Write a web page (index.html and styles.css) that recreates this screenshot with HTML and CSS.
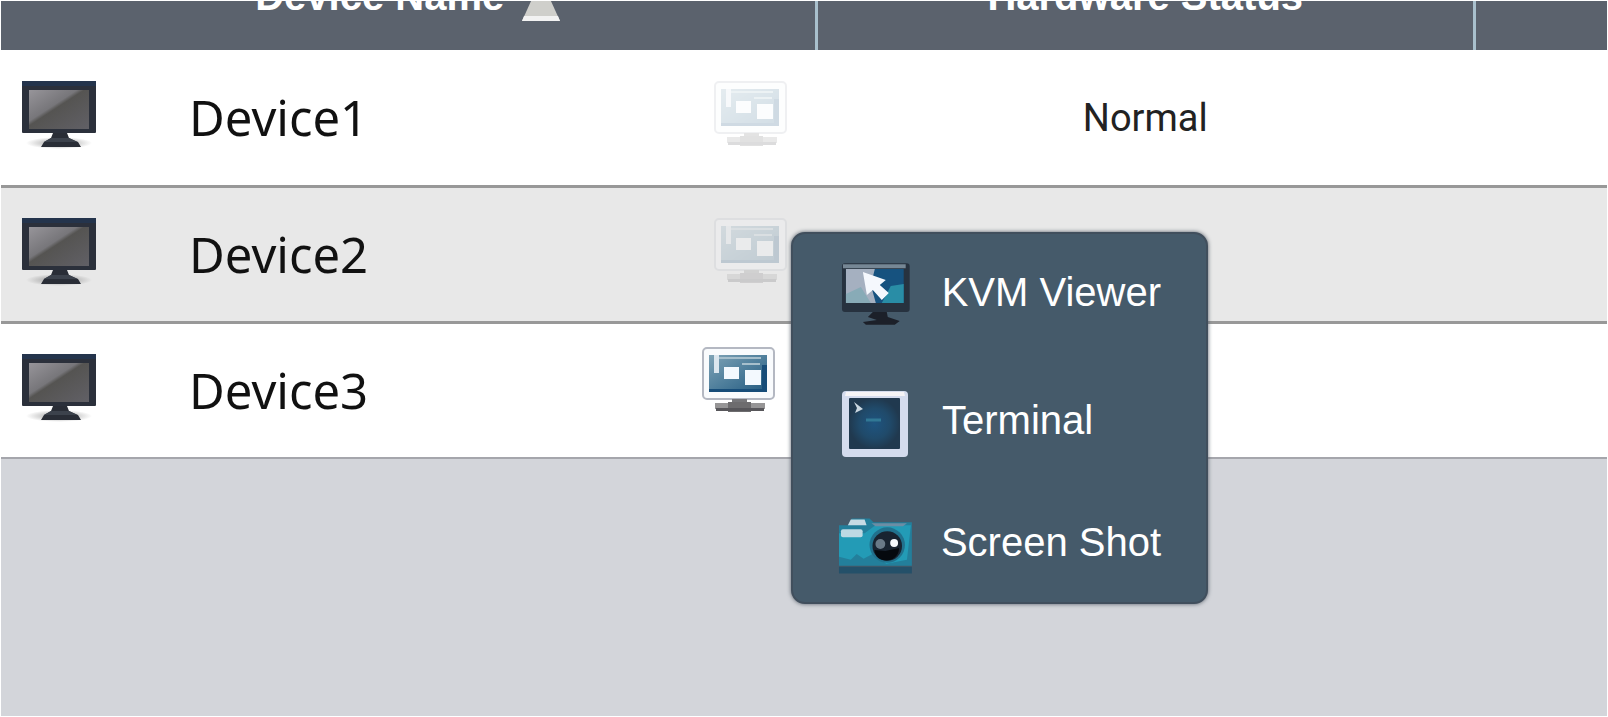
FILE: index.html
```html
<!DOCTYPE html>
<html lang="en">
<head>
    <meta charset="UTF-8">
    <meta name="viewport" content="width=device-width, initial-scale=1.0">
    <title>Devices</title>
    <link rel="stylesheet" href="styles.css">
</head>
<body>

    <!-- shared icons -->
    <svg class="sprite" width="0" height="0" aria-hidden="true">
        <defs>
            <linearGradient id="screenShine" x1="0" y1="0" x2="1" y2="1">
                <stop offset="0" stop-color="#97959a"/>
                <stop offset="0.4" stop-color="#77767a"/>
                <stop offset="0.46" stop-color="#555452"/>
                <stop offset="1" stop-color="#616066"/>
            </linearGradient>
            <linearGradient id="blueScreen" x1="0" y1="0" x2="1" y2="1">
                <stop offset="0" stop-color="#7fa3b6"/>
                <stop offset="0.5" stop-color="#4f7f9c"/>
                <stop offset="1" stop-color="#245b80"/>
            </linearGradient>
            <radialGradient id="termScreen">
                <stop offset="0" stop-color="#1e5480"/>
                <stop offset="0.6" stop-color="#204a6a"/>
                <stop offset="1" stop-color="#20394f"/>
            </radialGradient>
            <radialGradient id="shadow">
                <stop offset="0" stop-color="#555" stop-opacity="0.6"/>
                <stop offset="1" stop-color="#555" stop-opacity="0"/>
            </radialGradient>
        </defs>
        <symbol id="monitor" viewBox="0 0 74 68">
            <ellipse cx="37" cy="62" rx="33" ry="6" fill="url(#shadow)"/>
            <rect width="74" height="52" rx="1" fill="#2b303b"/>
            <rect width="74" height="5" fill="#24344c"/>
            <rect x="7" y="9" width="60" height="39" fill="url(#screenShine)"/>
            <path d="M31 52h14l2 5 9 4 3 5H19l3-5 7-4z" fill="#292d36"/>
            <path d="M29 57h18l8 4H22z" fill="#3c424c"/>
        </symbol>
        <symbol id="session" viewBox="0 0 74 68">
            <rect x="1" y="1" width="71" height="51" rx="4" fill="#f9fbfd" stroke="#b4b8c2" stroke-width="2"/>
            <rect x="7" y="8" width="58" height="37" fill="url(#blueScreen)"/>
            <path d="M7 42h58v3H7zM60 18h5v27h-5z" fill="#174d79"/>
            <path d="M12 8h5v18h-5z" fill="#dbe6ee"/>
            <path d="M17 11h42M40 17h18" stroke="#a6bfcc" stroke-width="2"/>
            <rect x="22" y="20" width="15" height="12" fill="#f3f9fe"/>
            <rect x="43" y="23" width="16" height="15" fill="#f3f9fe"/>
            <path d="M30 52h15v5H30z" fill="#77777a"/>
            <path d="M13 56h50v6H13z" fill="#969596"/>
            <path d="M26 55h23v10H26z" fill="#6d6c6e"/>
            <path d="M14 61h48v3H14z" fill="#57565a"/>
        </symbol>
        <symbol id="kvm" viewBox="0 0 76 68">
            <rect x="4" y="1" width="68" height="49" rx="3" fill="#27323f"/>
            <path d="M5 2h63v4H5z" fill="#768795"/>
            <path d="M8 7h58v34H8z" fill="#16527f"/>
            <path d="M8 7h29l-4 16 5 18H8z" fill="#a5b0c0"/>
            <path d="M8 32l15-7 10 16H8z" fill="#88abb7"/>
            <path d="M44 41l9-17 13-2v19z" fill="#298da6"/>
            <path d="M25 10l23 8-6 5 9 8-7 7-9-10-6 5z" fill="#f5f8fd"/>
            <path d="M35 50h14l1 5 12 4-5 4H28l-3-3 14-2-9-3z" fill="#1c2029"/>
        </symbol>
        <symbol id="terminal" viewBox="0 0 76 68">
            <rect x="4" y="1" width="66" height="66" rx="4" fill="#d4dcee"/>
            <path d="M8 2h58l1 4H7z" fill="#f5f4f6"/>
            <rect x="11" y="8" width="51" height="51" rx="1" fill="url(#termScreen)"/>
            <path d="M16 12l9 7-8 4 2-5z" fill="#cad7e0"/>
            <path d="M28 30h15" stroke="#317895" stroke-width="3"/>
        </symbol>
        <symbol id="camera" viewBox="0 0 76 56">
            <path d="M1 49h74v7H1z" fill="#245069"/>
            <path d="M1 7h9l4-7h18l4 4h39v44H1z" fill="#237f9b"/>
            <path d="M1 15h26l11-8h36l-4 35-21 4-14-10-9 5-7-5-6 6-12-3z" fill="#239bb6"/>
            <path d="M34 5h36l-4 3H38z" fill="#6c8da4"/>
            <path d="M13 1h14l2 6H10z" fill="#c6dbe4"/>
            <rect x="3" y="11" width="22" height="8" rx="2" fill="#bdd9e3"/>
            <circle cx="50" cy="27" r="18" fill="#21718d"/>
            <circle cx="50" cy="28" r="15" fill="#182330"/>
            <path d="M37 32l11 1 14-3c0 16-24 17-25 2z" fill="#05090e"/>
            <circle cx="43" cy="26" r="5" fill="#697987"/>
            <circle cx="57" cy="25" r="4" fill="#f5f9fd"/>
        </symbol>
    </svg>

    <table class="devices">
        <thead>
            <tr>
                <th class="col-name"><div class="head">Device Name
                    <svg class="sort" viewBox="0 0 38 42" aria-hidden="true"><path d="M19 0L38 42H0z" fill="#cfcfcb"/><path d="M2 37h34l2 5H0z" fill="#f2f2f2"/></svg>
                </div></th>
                <th class="col-status"><div class="head">Hardware Status</div></th>
                <th class="col-extra"><div class="head"></div></th>
            </tr>
        </thead>
        <tbody>
            <tr>
                <td>
                    <div class="device">
                        <svg class="icon"><use href="#monitor"/></svg>
                        <span class="name">Device1</span>
                        <div class="action"><button class="session" type="button" aria-label="Remote session" disabled><svg class="icon"><use href="#session"/></svg></button></div>
                    </div>
                </td>
                <td class="status">Normal</td>
                <td></td>
            </tr>
            <tr class="alt">
                <td>
                    <div class="device">
                        <svg class="icon"><use href="#monitor"/></svg>
                        <span class="name">Device2</span>
                        <div class="action"><button class="session" type="button" aria-label="Remote session" disabled><svg class="icon"><use href="#session"/></svg></button></div>
                    </div>
                </td>
                <td class="status"></td>
                <td></td>
            </tr>
            <tr>
                <td>
                    <div class="device">
                        <svg class="icon"><use href="#monitor"/></svg>
                        <span class="name">Device3</span>
                        <div class="action open">
                            <button class="session" type="button" aria-label="Remote session"><svg class="icon"><use href="#session"/></svg></button>
                            <div class="menu">
                                <button type="button"><svg class="menu-icon"><use href="#kvm"/></svg><span>KVM Viewer</span></button>
                                <button type="button"><svg class="menu-icon"><use href="#terminal"/></svg><span>Terminal</span></button>
                                <button type="button"><svg class="menu-icon camera"><use href="#camera"/></svg><span>Screen Shot</span></button>
                            </div>
                        </div>
                    </div>
                </td>
                <td class="status"></td>
                <td></td>
            </tr>
        </tbody>
    </table>

</body>
</html>
```
FILE: styles.css
```css
* {
    box-sizing: border-box;
}

body {
    margin: 0;
    min-height: 100vh;
    border: 1px solid #fff;
    background-color: #d3d5da;
    font-family: "Liberation Sans", Arial, sans-serif;
}

.sprite {
    position: absolute;
}

svg {
    display: block;
}

button {
    padding: 0;
    border: none;
    background: none;
    font: inherit;
    color: inherit;
    cursor: pointer;
}

/* table */
.devices {
    width: 100%;
    table-layout: fixed;
    border-collapse: collapse;
}

th,
td {
    padding: 0;
}

th {
    background-color: #5b626d;
    color: #fff;
    font-size: 40px;
    line-height: 40px;
}

th + th {
    border-left: 3px solid #a9c0cd;
}

.col-name {
    width: 50.75%;
}

.col-status {
    width: 41%;
}

/* the header is scrolled half out of view */
.head {
    display: flex;
    justify-content: center;
    align-items: flex-start;
    gap: 18px;
    height: 49px;
    margin-top: -25px;
    margin-bottom: 25px;
}

.sort {
    width: 38px;
    height: 42px;
    margin-top: 3px;
}

tbody tr {
    height: 136px;
    background-color: #fff;
    border-bottom: 3px solid #989898;
}

tbody tr.alt {
    background-color: #e8e8e8;
}

tbody tr:last-child {
    border-bottom: 2px solid #a5a6ac;
}

.device {
    display: flex;
    align-items: center;
    padding: 0 28px 5px 21px;
}

.icon {
    width: 74px;
    height: 68px;
}

.name {
    margin-left: 93px;
    padding-top: 4px;
    font-family: "Noto Sans", sans-serif;
    font-size: 49px;
    line-height: 64px;
    color: #111;
}

.status {
    padding-top: 2px;
    text-align: center;
    font-family: Roboto, sans-serif;
    font-size: 38px;
    color: #222;
}

.action {
    position: relative;
    margin-left: auto;
}

.action.open {
    margin-right: 12px;
    margin-bottom: 14px;
}

.session {
    display: block;
}

.session:disabled {
    opacity: 0.2;
    cursor: default;
}

/* pop-up menu */
.menu {
    position: absolute;
    left: calc(100% + 15px);
    top: -115px;
    z-index: 1;
    display: flex;
    flex-direction: column;
    gap: 60px;
    width: 417px;
    padding: 28px 45px;
    border: 2px solid #414f5d;
    border-radius: 14px;
    background-color: #455a6a;
    box-shadow: 0 0 4px #555e68;
    color: #fff;
    font-size: 40px;
    line-height: 40px;
}

.menu button {
    display: flex;
    align-items: center;
    gap: 28px;
    white-space: nowrap;
}

.menu span {
    padding-bottom: 8px;
}

.menu-icon {
    width: 76px;
    height: 68px;
}

.menu-icon.camera {
    height: 56px;
}
```
